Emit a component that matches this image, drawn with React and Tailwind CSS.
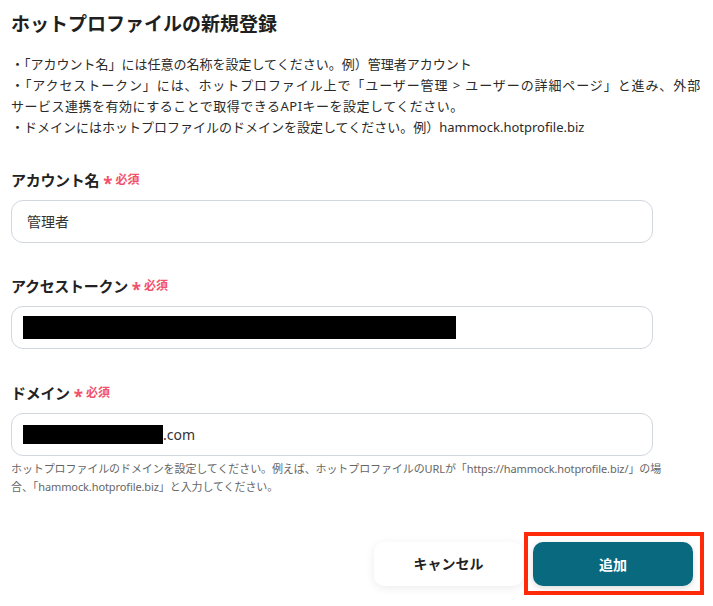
import React from "react";

const FONT = "font-['Noto_Sans','Noto_Sans_CJK_JP',sans-serif]";

function Label({ children }) {
  return (
    <div className="flex items-center h-[22px]">
      <span className="text-[15px] font-bold text-[#222] tracking-[-0.3px]">{children}</span>
      <span className="ml-[4px] text-[17px] font-bold text-[#f2506b] leading-none translate-y-[3px]">*</span>
      <span className="ml-[3px] text-[12px] font-bold text-[#f2506b]">必須</span>
    </div>
  );
}

function Field({ children }) {
  return (
    <div className="mt-[9px] w-[642px] h-[43px] rounded-[12px] border border-[#d2d6dd] bg-white flex items-center px-[11px]">
      {children}
    </div>
  );
}

export default function App() {
  return (
    <div className={`${FONT} bg-white w-[713px] h-[606px] overflow-hidden text-[#222]`}>
      <div className="pl-[11px] pt-[10px]">
        <h1 className="text-[19px] font-bold leading-[28px] text-[#1f1f1f]">ホットプロファイルの新規登録</h1>

        <div className="mt-[16px] text-[13px] leading-[21px] text-[#2a2a2a] whitespace-nowrap">
          <p>・「アカウント名」には任意の名称を設定してください。例）管理者アカウント</p>
          <p className="tracking-[0.9px]">・「アクセストークン」には、ホットプロファイル上で「ユーザー管理 &gt; ユーザーの詳細ページ」と進み、外部</p>
          <p className="tracking-[0.5px]">サービス連携を有効にすることで取得できるAPIキーを設定してください。</p>
          <p>・ドメインにはホットプロファイルのドメインを設定してください。例）hammock.hotprofile.biz</p>
        </div>

        <div className="mt-[31px]">
          <Label>アカウント名</Label>
          <Field>
            <span className="text-[14px] text-[#333] pl-[4px]">管理者</span>
          </Field>
        </div>

        <div className="mt-[32px]">
          <Label>アクセストークン</Label>
          <Field>
            <div className="w-[433px] h-[23px] bg-black"></div>
          </Field>
        </div>

        <div className="mt-[33px]">
          <Label>ドメイン</Label>
          <Field>
            <div className="w-[140px] h-[19px] bg-black"></div>
            <span className="text-[14px] text-[#333]">.com</span>
          </Field>
          <p className="mt-[4px] text-[11px] leading-[18px] text-[#666] whitespace-nowrap tracking-[-0.1px]">
            ホットプロファイルのドメインを設定してください。例えば、ホットプロファイルのURLが「https://hammock.hotprofile.biz/」の場
            <br />
            合、「hammock.hotprofile.biz」と入力してください。
          </p>
        </div>
      </div>

      <div className="mt-[36px] flex justify-end items-center pr-[9px]">
        <button className="w-[149px] h-[44px] rounded-[10px] bg-white shadow-[0_2px_10px_rgba(0,0,0,0.08)] text-[14px] font-bold text-[#222] mr-[1px]">
          キャンセル
        </button>
        <div className="border-4 border-[#ff2a0a] pl-[5px] pr-[7px] pt-[6px] pb-[5px]">
          <button className="w-[160px] h-[44px] rounded-[10px] bg-[#08697f] shadow-[0_2px_6px_rgba(0,0,0,0.15)] text-[14px] font-bold text-white">
            追加
          </button>
        </div>
      </div>
    </div>
  );
}
